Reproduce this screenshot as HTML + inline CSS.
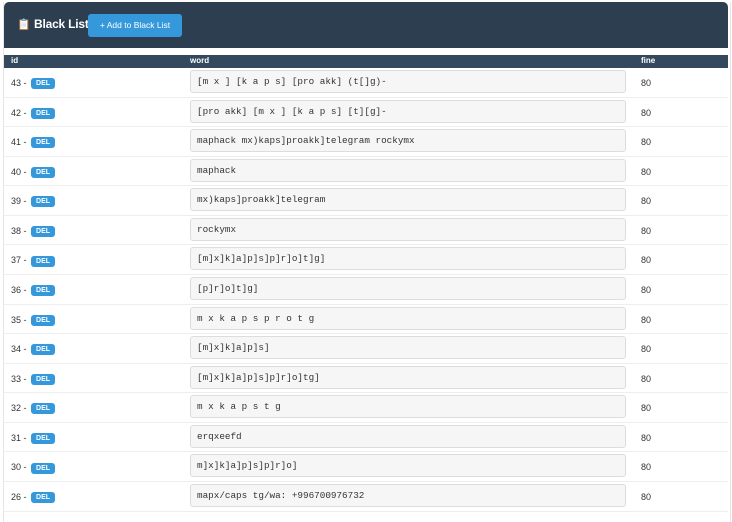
<!DOCTYPE html>
<html><head><style>
body{margin:0;width:732px;height:512px;overflow:hidden;background:#fff;font-family:"Liberation Sans",sans-serif;}
.wrap{position:absolute;left:3px;top:2px;width:726px;height:520px;border-left:1px solid #e6e6e6;border-right:1px solid #e6e6e6;}
.hdr{position:absolute;left:4px;top:2px;width:724px;height:46px;background:#2c3e50;border-radius:5px 5px 0 0;}
.ico{position:absolute;left:13px;top:16px;font-size:11px;}
.title{position:absolute;left:30px;top:15px;color:#fff;font-size:12px;font-weight:bold;letter-spacing:-0.2px;}
.btn{position:absolute;left:84px;top:12px;width:94px;height:23px;background:#3498db;border-radius:3px;color:#fff;font-size:8.5px;line-height:23px;text-align:center;}
.th{position:absolute;left:4px;top:55px;width:724px;height:13px;background:#34495e;color:#fff;font-size:8px;font-weight:bold;}
.th span{position:absolute;top:1px;}
.row{position:absolute;left:4px;width:724px;height:29.57px;border-bottom:1px solid #eee;box-sizing:border-box;font-size:9px;color:#333;}
.id{position:absolute;left:7px;top:10px;}
.del{display:inline-block;background:#3498db;color:#fff;font-size:7px;font-weight:bold;border-radius:3px;padding:0 5px;height:11px;line-height:11px;vertical-align:middle;margin-left:2px;}
.w{position:absolute;left:186px;top:2px;width:436px;height:23px;background:#f6f6f6;border:1px solid #ddd;border-radius:3px;box-sizing:border-box;font-family:"Liberation Mono",monospace;font-size:9.3px;line-height:21px;padding-left:6px;color:#333;}
.f{position:absolute;left:637px;top:10px;}
</style></head><body>
<div class="wrap"></div>
<div class="hdr"><span class="ico">📋</span><div class="title">Black List</div><div class="btn">+ Add to Black List</div></div>
<div class="th"><span style="left:7px">id</span><span style="left:186px">word</span><span style="left:637px">fine</span></div>
<div class="row" style="top:68px"><span class="id">43 - <span class="del">DEL</span></span><div class="w">[m x ] [k a p s] [pro akk] (t[]g)-</div><span class="f">80</span></div>
<div class="row" style="top:97.6px"><span class="id">42 - <span class="del">DEL</span></span><div class="w">[pro akk] [m x ] [k a p s] [t][g]-</div><span class="f">80</span></div>
<div class="row" style="top:127.1px"><span class="id">41 - <span class="del">DEL</span></span><div class="w">maphack mx)kaps]proakk]telegram rockymx</div><span class="f">80</span></div>
<div class="row" style="top:156.7px"><span class="id">40 - <span class="del">DEL</span></span><div class="w">maphack</div><span class="f">80</span></div>
<div class="row" style="top:186.3px"><span class="id">39 - <span class="del">DEL</span></span><div class="w">mx)kaps]proakk]telegram</div><span class="f">80</span></div>
<div class="row" style="top:215.9px"><span class="id">38 - <span class="del">DEL</span></span><div class="w">rockymx</div><span class="f">80</span></div>
<div class="row" style="top:245.4px"><span class="id">37 - <span class="del">DEL</span></span><div class="w">[m]x]k]a]p]s]p]r]o]t]g]</div><span class="f">80</span></div>
<div class="row" style="top:275px"><span class="id">36 - <span class="del">DEL</span></span><div class="w">[p]r]o]t]g]</div><span class="f">80</span></div>
<div class="row" style="top:304.6px"><span class="id">35 - <span class="del">DEL</span></span><div class="w">m x k a p s p r o t g</div><span class="f">80</span></div>
<div class="row" style="top:334.1px"><span class="id">34 - <span class="del">DEL</span></span><div class="w">[m]x]k]a]p]s]</div><span class="f">80</span></div>
<div class="row" style="top:363.7px"><span class="id">33 - <span class="del">DEL</span></span><div class="w">[m]x]k]a]p]s]p]r]o]tg]</div><span class="f">80</span></div>
<div class="row" style="top:393.3px"><span class="id">32 - <span class="del">DEL</span></span><div class="w">m x k a p s t g</div><span class="f">80</span></div>
<div class="row" style="top:422.8px"><span class="id">31 - <span class="del">DEL</span></span><div class="w">erqxeefd</div><span class="f">80</span></div>
<div class="row" style="top:452.4px"><span class="id">30 - <span class="del">DEL</span></span><div class="w">m]x]k]a]p]s]p]r]o]</div><span class="f">80</span></div>
<div class="row" style="top:482px"><span class="id">26 - <span class="del">DEL</span></span><div class="w">mapx/caps tg/wa: +996700976732</div><span class="f">80</span></div>
</body></html>
